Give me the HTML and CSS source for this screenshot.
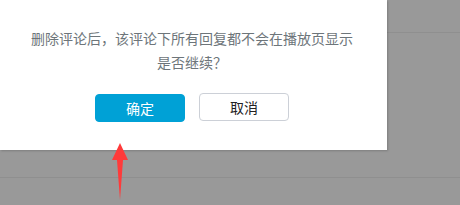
FILE: index.html
```html
<!DOCTYPE html>
<html>
<head>
<meta charset="utf-8">
<link rel="stylesheet" href="styles.css">
</head>
<body>
<div class="page">
  <div class="row row-top"></div>
  <div class="row row-mid"></div>
  <div class="row row-bottom"></div>
</div>
<div class="dialog">
  <div class="msg">删除评论后，该评论下所有回复都不会在播放页显示<br>是否继续？</div>
  <div class="actions">
    <button class="btn btn-primary">确定</button>
    <button class="btn btn-default">取消</button>
  </div>
</div>
<svg class="arrow" width="16" height="57" viewBox="0 0 16 57">
  <polygon points="8,0 16,17 11,17 8,57 5,17 0,17" fill="#ff3a3a"/>
</svg>
</body>
</html>
```
FILE: styles.css
```css
html, body {
  margin: 0;
  padding: 0;
}
body {
  width: 460px;
  height: 205px;
  background: #999999;
  overflow: hidden;
  position: relative;
  font-family: "Noto Sans CJK SC", "Liberation Sans", sans-serif;
}
.page {
  display: flex;
  flex-direction: column;
}
.row-top {
  height: 32px;
  border-bottom: 1px solid #8f8f8f;
}
.row-mid {
  height: 144px;
  border-bottom: 1px solid #8f8f8f;
}
.dialog {
  position: absolute;
  left: 0;
  top: 0;
  width: 387px;
  height: 150px;
  background: #fff;
  box-shadow: 1px 1px 2px rgba(0,0,0,0.18);
  display: flex;
  flex-direction: column;
  align-items: flex-start;
  padding-top: 26px;
  box-sizing: border-box;
}
.msg {
  width: 384px;
  text-align: center;
  font-size: 14px;
  line-height: 24px;
  color: #6d757a;
}
.actions {
  margin-top: 19px;
  display: flex;
  gap: 14px;
  width: 384px;
  justify-content: center;
}
.btn {
  width: 90px;
  height: 28px;
  border-radius: 4px;
  font-size: 14px;
  font-family: inherit;
  padding: 0;
  line-height: 26px;
}
.btn-primary {
  background: #00a1d6;
  border: 1px solid #00a1d6;
  color: #fff;
  margin-top: 1px;
}
.btn-default {
  background: #fff;
  border: 1px solid #ccd0d7;
  color: #222;
}
.arrow {
  position: absolute;
  left: 112px;
  top: 143px;
}
```
